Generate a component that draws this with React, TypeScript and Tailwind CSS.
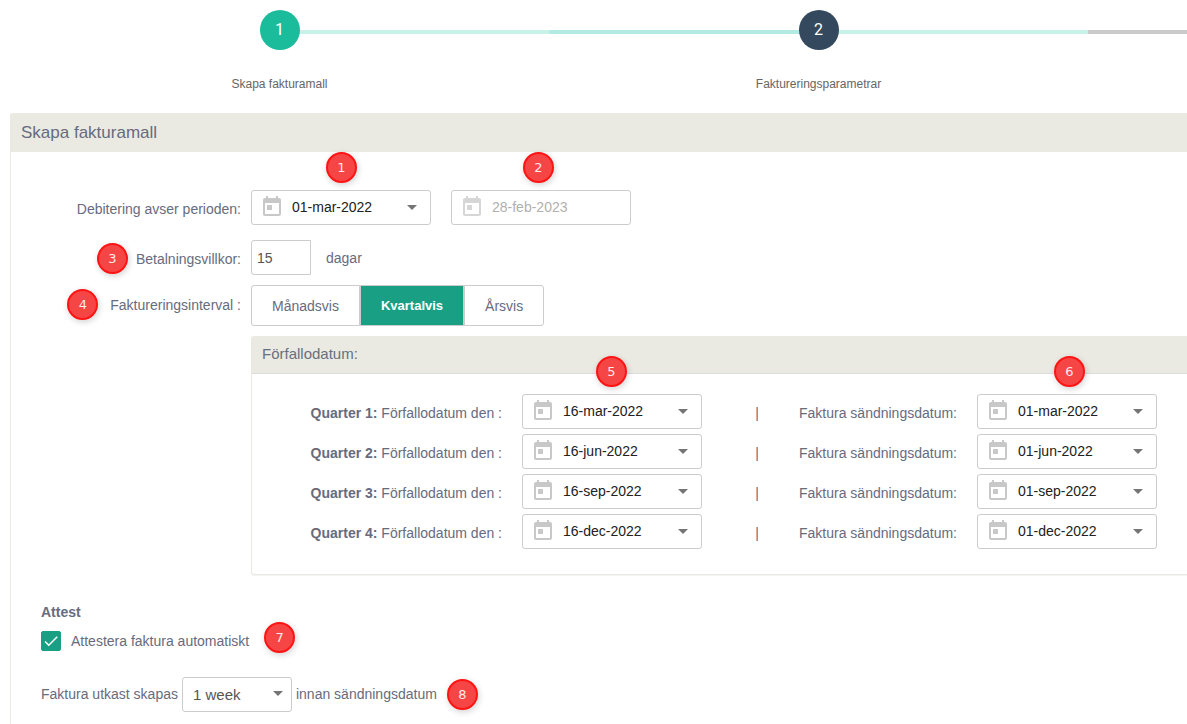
import clsx from "clsx";
import { ReactNode, useState } from "react";
import { MdArrowDropDown, MdCheck } from "react-icons/md";

const quarters = [
  { id: 1, due: "16-mar-2022", send: "01-mar-2022" },
  { id: 2, due: "16-jun-2022", send: "01-jun-2022" },
  { id: 3, due: "16-sep-2022", send: "01-sep-2022" },
  { id: 4, due: "16-dec-2022", send: "01-dec-2022" },
];

const intervals = ["Månadsvis", "Kvartalvis", "Årsvis"];

const CalendarIcon = ({ className }: { className?: string }) => (
  <svg viewBox="0 0 24 24" fill="currentColor" className={clsx("h-6 w-6 shrink-0", className)}>
    <path d="M19 3h-1V1h-2v2H8V1H6v2H5c-1.11 0-1.99.9-1.99 2L3 19c0 1.1.89 2 2 2h14c1.1 0 2-.9 2-2V5c0-1.1-.9-2-2-2zm0 16H5V8h14v11zM7 10h5v5H7z" />
  </svg>
);

const Badge = ({ value, className }: { value: number; className?: string }) => (
  <span
    className={clsx(
      "flex h-[31px] w-[31px] shrink-0 items-center justify-center rounded-full border-2 border-[#ff1414] bg-[#f54545] font-['DejaVu_Sans',sans-serif] text-[13px] text-[#ffe9e9] shadow-[1px_2px_6px_rgba(0,0,0,0.18)]",
      className
    )}
  >
    {value}
  </span>
);

const Step = ({
  value,
  label,
  circle,
  left,
  right,
}: {
  value: number;
  label: string;
  circle: string;
  left: string;
  right: string;
}) => (
  <li className="relative flex flex-col items-center">
    {/* connector  */}
    <div className="absolute inset-x-0 top-5 flex h-1">
      <div className={clsx("flex-1", left)} />
      <div className={clsx("flex-1", right)} />
    </div>
    <span
      className={clsx(
        "relative flex h-10 w-10 items-center justify-center rounded-full font-['Roboto',sans-serif] text-base text-white",
        circle
      )}
    >
      {value}
    </span>
    <span className="mt-6 text-xs leading-5 text-[#666]">{label}</span>
  </li>
);

const DateField = ({
  id,
  initial,
  label,
  disabled = false,
}: {
  id: string;
  initial: string;
  label?: string;
  disabled?: boolean;
}) => {
  const [value, setValue] = useState(initial);
  return (
    <div className="flex h-[35px] w-[180px] items-center rounded-[3px] border border-[#ccc] bg-white pr-1.5 pb-px pl-2">
      <CalendarIcon className={disabled ? "text-[#d6d6d6]" : "text-[#c8c8c8]"} />
      <input
        id={id}
        type="text"
        aria-label={label}
        value={value}
        disabled={disabled}
        onChange={(e) => setValue(e.target.value)}
        className="ml-2 w-full min-w-0 bg-transparent text-sm text-[#212121] outline-none disabled:text-[#b0b0b0]"
      />
      {!disabled && (
        <button type="button" aria-label="Välj datum" className="shrink-0 text-[#757575]">
          <MdArrowDropDown size={24} />
        </button>
      )}
    </div>
  );
};

const FieldLabel = ({ htmlFor, children }: { htmlFor?: string; children: ReactNode }) => (
  <label htmlFor={htmlFor} className="whitespace-nowrap">
    {children}
  </label>
);

const App = () => {
  const [days, setDays] = useState("15");
  const [interval, setInterval] = useState("Kvartalvis");
  const [approve, setApprove] = useState(true);

  return (
    <div className="overflow-hidden bg-white pl-2.5 font-['Liberation_Sans',Arial,sans-serif] text-sm leading-5 text-[#676b7e]">
      {/* stepper  */}
      <ol className="grid grid-cols-[539fr_539fr_99fr] pt-2.5">
        <Step
          value={1}
          label="Skapa fakturamall"
          circle="bg-[#1bbc9b]"
          left="bg-transparent"
          right="bg-[#c8f1e8]"
        />
        <Step
          value={2}
          label="Faktureringsparametrar"
          circle="bg-[#34495e]"
          left="bg-[#b2ebe4]"
          right="bg-[#c8f1e8]"
        />
        <li className="relative">
          <div className="absolute inset-x-0 top-5 h-1 bg-[#cacaca]" />
        </li>
      </ol>

      <section className="mt-[19px] rounded-tl-[3px] border-l border-[#eaeae2]">
        <h1 className="flex h-[39px] items-center bg-[#eaeae2] px-2.5 text-[17px]">
          Skapa fakturamall
        </h1>

        <form className="pb-3" onSubmit={(e) => e.preventDefault()}>
          <div className="grid grid-cols-[230px_minmax(0,1fr)] gap-x-2.5 gap-y-2.5 pt-[38px]">
            {/* period  */}
            <div className="flex h-10 items-center justify-end pb-0.5">
              <FieldLabel htmlFor="from">Debitering avser perioden:</FieldLabel>
            </div>
            <div className="flex gap-5">
              <div className="relative">
                <DateField id="from" initial="01-mar-2022" />
                <Badge value={1} className="absolute -top-[38px] left-[75px]" />
              </div>
              <div className="relative">
                <DateField id="to" label="Till" initial="28-feb-2023" disabled />
                <Badge value={2} className="absolute -top-[38px] left-[72px]" />
              </div>
            </div>

            {/* payment terms  */}
            <div className="flex items-center justify-end gap-2 pt-0.5">
              <Badge value={3} />
              <FieldLabel htmlFor="days">Betalningsvillkor:</FieldLabel>
            </div>
            <div className="flex items-center gap-[15px]">
              <input
                id="days"
                type="text"
                value={days}
                onChange={(e) => setDays(e.target.value)}
                className="h-[35px] w-[60px] rounded-l-[3px] border border-[#ccc] px-[5px] text-[#555] outline-none"
              />
              <span>dagar</span>
            </div>

            {/* interval  */}
            <div className="flex items-center justify-end gap-3 pb-0.5">
              <Badge value={4} />
              <span id="interval" className="whitespace-nowrap">
                Faktureringsinterval :
              </span>
            </div>
            <div role="group" aria-labelledby="interval" className="flex">
              {intervals.map((item) => (
                <button
                  key={item}
                  type="button"
                  aria-pressed={item === interval}
                  onClick={() => setInterval(item)}
                  className={clsx(
                    "h-[41px] border border-[#ccc] px-5 first:rounded-l-[3px] last:rounded-r-[3px]",
                    item === interval && "bg-[#189f84] text-[13px] font-bold text-white"
                  )}
                >
                  {item}
                </button>
              ))}
            </div>

            {/* due dates  */}
            <div className="col-start-2 rounded-l-[3px] border border-r-0 border-[#eaeae2] shadow-[0_1px_1px_rgba(0,0,0,0.05)]">
              <h2 className="flex h-[37px] items-center border-b border-[#ddd] bg-[#eaeae2] px-2.5 pb-0.5 text-[15px] text-[#667080]">
                Förfallodatum:
              </h2>
              <div className="relative flex flex-col gap-[5px] pt-5 pb-[25px]">
                <Badge value={5} className="absolute -top-[18px] left-[344px]" />
                <Badge value={6} className="absolute -top-[18px] left-[802px]" />
                {quarters.map((q) => (
                  <div key={q.id} className="flex items-center">
                    <div className="w-[250px] shrink-0 pt-0.5 text-right">
                      <FieldLabel htmlFor={`due-${q.id}`}>
                        <b>Quarter {q.id}:</b> Förfallodatum den :
                      </FieldLabel>
                    </div>
                    <div className="ml-5 shrink-0">
                      <DateField id={`due-${q.id}`} initial={q.due} />
                    </div>
                    <span className="w-[75px] shrink-0 pt-0.5 pr-[18px] text-right">
                      |
                    </span>
                    <div className="w-[180px] shrink-0 pt-0.5 text-right">
                      <FieldLabel htmlFor={`send-${q.id}`}>Faktura sändningsdatum:</FieldLabel>
                    </div>
                    <div className="ml-5 shrink-0">
                      <DateField id={`send-${q.id}`} initial={q.send} />
                    </div>
                  </div>
                ))}
              </div>
            </div>
          </div>

          {/* approval  */}
          <div className="px-[30px] pt-[27px]">
            <h3 className="font-bold">Attest</h3>
            <div className="flex items-center gap-[15px]">
              <label className="flex items-center gap-2.5 pt-1.5">
                <span className="relative h-5 w-5">
                  <input
                    type="checkbox"
                    checked={approve}
                    onChange={(e) => setApprove(e.target.checked)}
                    className="block h-5 w-5 appearance-none rounded-xs border border-[#189f84] checked:bg-[#189f84]"
                  />
                  {approve && (
                    <MdCheck
                      size={18}
                      className="pointer-events-none absolute top-px left-px text-white"
                    />
                  )}
                </span>
                Attestera faktura automatiskt
              </label>
              <Badge value={7} />
            </div>

            <div className="mt-6 flex items-center gap-1">
              <span className="pb-0.5">
                <FieldLabel htmlFor="draft">Faktura utkast skapas</FieldLabel>
              </span>
              <span className="relative">
                <select
                  id="draft"
                  defaultValue="1 week"
                  className="block h-[35px] w-[110px] appearance-none rounded-[3px] border border-[#ccc] bg-white px-2.5 text-[15px] text-[#555] outline-none"
                >
                  <option>1 week</option>
                  <option>2 weeks</option>
                  <option>1 month</option>
                </select>
                <MdArrowDropDown
                  size={24}
                  className="pointer-events-none absolute top-1 right-0.5 text-[#757575]"
                />
              </span>
              <span className="pb-0.5">innan sändningsdatum</span>
              <Badge value={8} className="ml-1.5" />
            </div>
          </div>
        </form>
      </section>
    </div>
  );
};

export default App;
